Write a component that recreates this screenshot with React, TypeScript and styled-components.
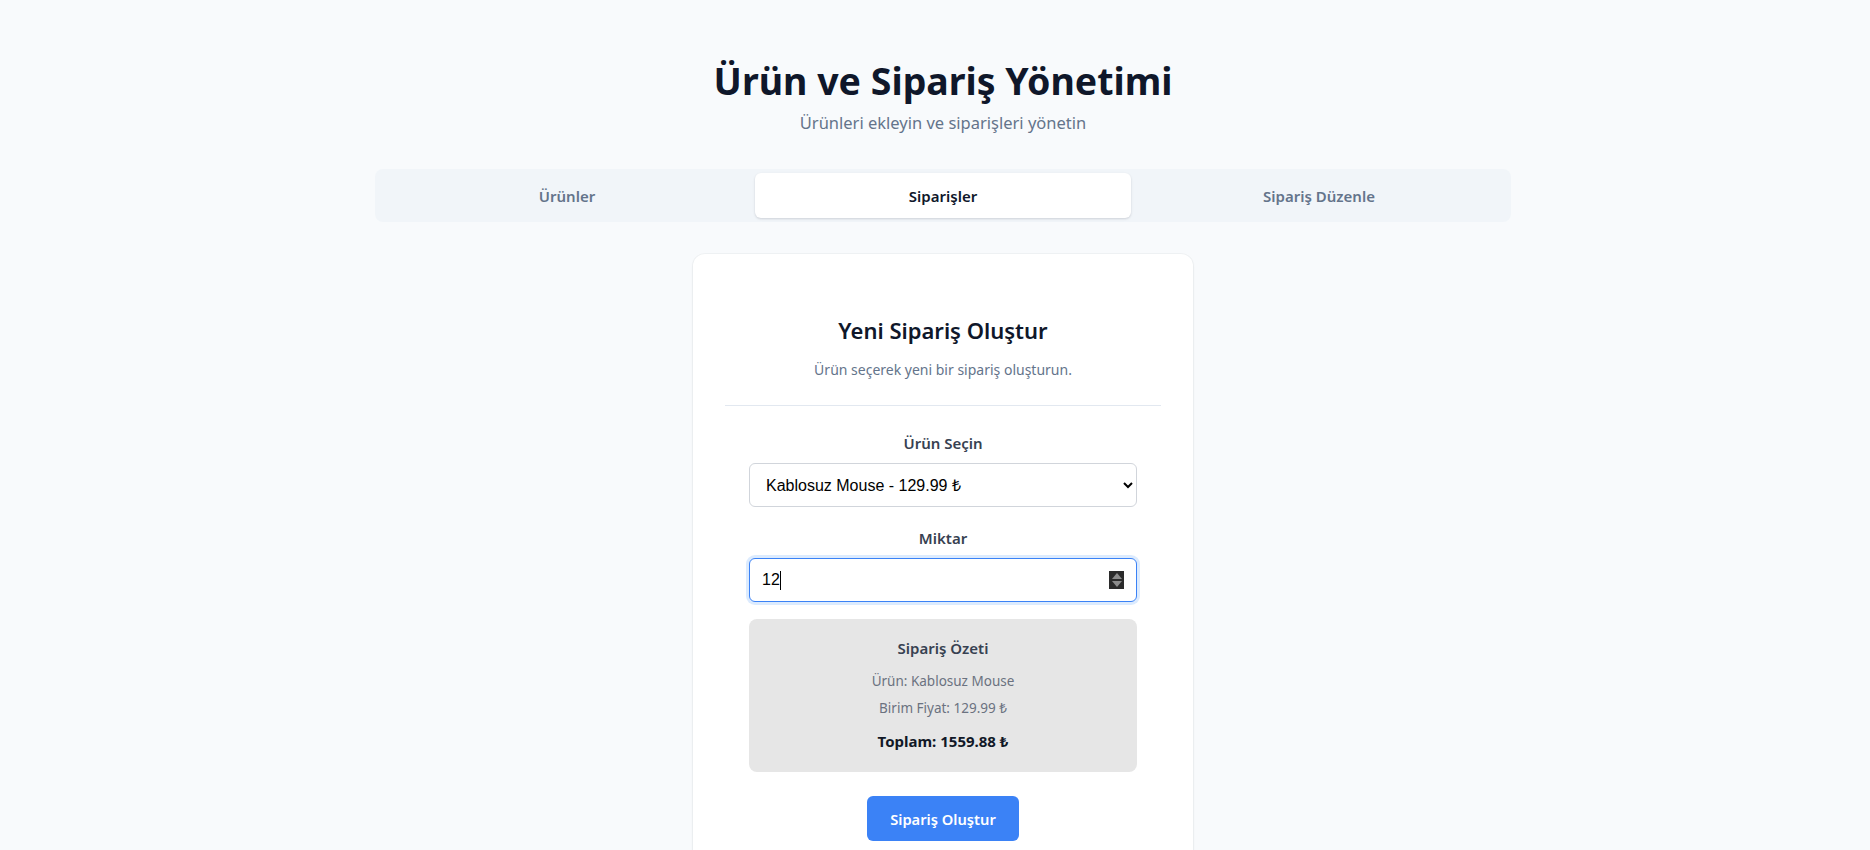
import React from "react";
import styled, { createGlobalStyle } from "styled-components";

const GlobalStyle = createGlobalStyle`
  html, body {
    margin: 0;
    padding: 0;
    background: #f8fafc;
  }
  body {
    font-family: "Noto Sans", "Open Sans", sans-serif;
    color: #0f172a;
  }
  * { box-sizing: border-box; }
`;

const Page = styled.main`
  min-height: 100vh;
  padding: 61px 0 40px 16px;
  display: flex;
  flex-direction: column;
  align-items: center;
`;

const Header = styled.header`
  display: flex;
  flex-direction: column;
  align-items: center;
`;

const Title = styled.h1`
  margin: 0;
  font-size: 37.5px;
  line-height: 40px;
  font-weight: 700;
  color: #0f172a;
`;

const Subtitle = styled.p`
  margin: 8px 0 0;
  font-size: 16.5px;
  line-height: 28px;
  color: #64748b;
`;

const TabList = styled.nav`
  margin-top: 32px;
  width: 1136px;
  padding: 4px;
  background: #f1f5f9;
  border-radius: 8px;
  display: grid;
  grid-template-columns: repeat(3, 1fr);
`;

const Tab = styled.button<{ $active?: boolean }>`
  height: 45px;
  border: none;
  border-radius: 6px;
  font-family: inherit;
  font-size: 15px;
  font-weight: 600;
  cursor: pointer;
  background: ${(p) => (p.$active ? "#ffffff" : "transparent")};
  color: ${(p) => (p.$active ? "#0f172a" : "#64748b")};
  box-shadow: ${(p) =>
    p.$active ? "0 1px 3px rgba(15, 23, 42, 0.1), 0 1px 2px rgba(15, 23, 42, 0.06)" : "none"};
`;

const Card = styled.section`
  margin-top: 32px;
  width: 500px;
  background: #ffffff;
  border-radius: 12px;
  box-shadow: 0 0 0 1px rgba(15, 23, 42, 0.03), 0 1px 3px rgba(15, 23, 42, 0.06);
  padding: 1px 32px 32px;
`;

const CardHeader = styled.div`
  padding-top: 59px;
  padding-bottom: 25px;
  border-bottom: 1px solid #e2e8f0;
  text-align: center;
`;

const CardTitle = styled.h2`
  margin: 0;
  font-size: 22px;
  line-height: 32px;
  font-weight: 600;
  color: #0f172a;
`;

const CardDesc = styled.p`
  margin: 14px 0 0;
  font-size: 14px;
  line-height: 20px;
  color: #64748b;
`;

const Form = styled.form`
  padding: 25px 24px 0;
  display: flex;
  flex-direction: column;
`;

const Field = styled.div`
  display: flex;
  flex-direction: column;
  gap: 8px;
  & + & {
    margin-top: 19px;
  }
`;

const Label = styled.label`
  text-align: center;
  font-size: 15px;
  line-height: 24px;
  font-weight: 600;
  color: #374151;
`;

const Select = styled.select`
  height: 44px;
  width: 100%;
  padding: 0 12px;
  border: 1px solid #d1d5db;
  border-radius: 6px;
  background: #ffffff;
  font-family: "Liberation Sans", Arial, sans-serif;
  font-size: 16px;
  color: #000000;
`;

const InputWrap = styled.div`
  position: relative;
`;

const NumberInput = styled.input`
  height: 44px;
  width: 100%;
  padding: 0 12px;
  border: 1px solid #3b82f6;
  border-radius: 6px;
  outline: none;
  box-shadow: 0 0 0 3px rgba(191, 219, 254, 0.55);
  background: #ffffff;
  font-family: "Liberation Sans", Arial, sans-serif;
  font-size: 16px;
  color: #000000;
`;

const Caret = styled.span`
  position: absolute;
  left: 31px;
  top: 13px;
  width: 1px;
  height: 19px;
  background: #000000;
`;

const Spinner = styled.span`
  position: absolute;
  right: 13px;
  top: 13px;
  width: 15px;
  height: 18px;
  background: #2b2b2b;
  display: flex;
  flex-direction: column;
  align-items: center;
  justify-content: center;
  gap: 2px;
`;

const Arrow = styled.span<{ $down?: boolean }>`
  width: 0;
  height: 0;
  border-left: 5px solid transparent;
  border-right: 5px solid transparent;
  ${(p) =>
    p.$down
      ? "border-top: 6px solid #8c8c8c;"
      : "border-bottom: 6px solid #8c8c8c;"}
`;

const Summary = styled.div`
  margin-top: 17px;
  background: #e6e6e6;
  border-radius: 8px;
  padding: 17px 16px 19px;
  display: flex;
  flex-direction: column;
  align-items: center;
`;

const SummaryTitle = styled.h3`
  margin: 0;
  font-size: 15px;
  line-height: 24px;
  font-weight: 600;
  color: #374151;
`;

const SummaryLine = styled.p<{ $first?: boolean }>`
  margin: ${(p) => (p.$first ? "11px" : "7px")} 0 0;
  font-size: 13.5px;
  line-height: 20px;
  color: #6b7280;
`;

const SummaryTotal = styled.p`
  margin: 11px 0 0;
  font-size: 15px;
  line-height: 24px;
  font-weight: 700;
  color: #111827;
`;

const SubmitRow = styled.div`
  margin-top: 24px;
  display: flex;
  justify-content: center;
`;

const SubmitButton = styled.button`
  height: 45px;
  padding: 0 23px;
  border: none;
  border-radius: 6px;
  background: #3b82f6;
  color: #ffffff;
  font-family: inherit;
  font-size: 14.7px;
  font-weight: 600;
  cursor: pointer;
`;

export default function App() {
  return (
    <>
      <GlobalStyle />
      <Page>
        <Header>
          <Title>Ürün ve Sipariş Yönetimi</Title>
          <Subtitle>Ürünleri ekleyin ve siparişleri yönetin</Subtitle>
        </Header>
        <TabList>
          <Tab>Ürünler</Tab>
          <Tab $active>Siparişler</Tab>
          <Tab>Sipariş Düzenle</Tab>
        </TabList>
        <Card>
          <CardHeader>
            <CardTitle>Yeni Sipariş Oluştur</CardTitle>
            <CardDesc>Ürün seçerek yeni bir sipariş oluşturun.</CardDesc>
          </CardHeader>
          <Form onSubmit={(e) => e.preventDefault()}>
            <Field>
              <Label htmlFor="product">Ürün Seçin</Label>
              <Select id="product" defaultValue="mouse">
                <option value="mouse">Kablosuz Mouse - 129.99 ₺</option>
              </Select>
            </Field>
            <Field>
              <Label htmlFor="qty">Miktar</Label>
              <InputWrap>
                <NumberInput id="qty" type="text" defaultValue="12" />
                <Caret />
                <Spinner>
                  <Arrow />
                  <Arrow $down />
                </Spinner>
              </InputWrap>
            </Field>
            <Summary>
              <SummaryTitle>Sipariş Özeti</SummaryTitle>
              <SummaryLine $first>Ürün: Kablosuz Mouse</SummaryLine>
              <SummaryLine>Birim Fiyat: 129.99 ₺</SummaryLine>
              <SummaryTotal>Toplam: 1559.88 ₺</SummaryTotal>
            </Summary>
            <SubmitRow>
              <SubmitButton type="submit">Sipariş Oluştur</SubmitButton>
            </SubmitRow>
          </Form>
        </Card>
      </Page>
    </>
  );
}
